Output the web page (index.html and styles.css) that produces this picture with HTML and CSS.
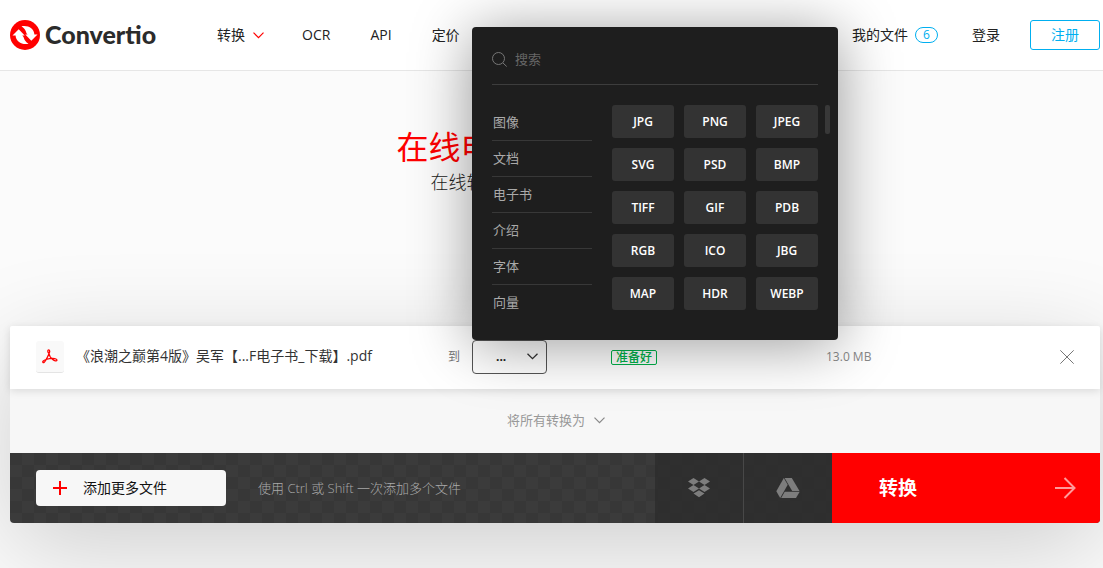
FILE: index.html
```
<!DOCTYPE html>
<html lang="zh-CN">
<head>
  <meta charset="UTF-8">
  <meta name="viewport" content="width=device-width, initial-scale=1">
  <title>Convertio</title>
  <link rel="stylesheet" href="styles.css">
</head>
<body>
<header class="header">
  <a class="logo" href="#">
    <svg width="30" height="30" viewBox="0 0 30 30">
      <circle cx="15" cy="15" r="15" fill="#f00"/>
      <path d="M2.500 15.500 8.700 9.200l6 6.300h-2.500c2.600 1.500.6 4.500 6.300 8.300C12 25 5.800 21.800 5.600 15.500z" fill="#fff"/>
      <path d="M27.500 14.500 21.300 20.800l-6-6.300h2.500c-2.600-1.500-.6-4.500-6.300-8.300C18 5 24.200 8.200 24.400 14.500z" fill="#fff"/>
    </svg>
    <span>Convertio</span>
  </a>
  <nav class="nav">
    <a class="nav-convert" href="#">转换
      <svg width="11" height="7" viewBox="0 0 11 7"><path d="M.5.700l5 5 5-5" fill="none" stroke="#f00" stroke-width="1.200"/></svg>
    </a>
    <a href="#">OCR</a>
    <a href="#">API</a>
    <a href="#">定价</a>
  </nav>
  <nav class="user">
    <a href="#">我的文件 <span class="badge">6</span></a>
    <a href="#">登录</a>
    <a class="signup" href="#">注册</a>
  </nav>
</header>

<main class="main">
  <div class="intro">
    <h1>在线电子书文件转换器</h1>
    <p>在线转换您的电子书为任意格式</p>
  </div>

  <section class="converter">
    <div class="file">
      <span class="file-icon">
        <svg width="16" height="15" viewBox="0 0 16 15" fill="none" stroke="#f00" stroke-width="1.300">
          <path d="M6.800 4.300C5.300 2.800 5.600.8 6.700.8s1.400 1.800.3 4C6 7.200 4.600 9.800 3.600 11.500c-.8 1.400-1.900 2.500-2.600 1.900-.8-.8.6-2.200 3-2.900 2.300-.7 4.600-1.100 6.700-1.100 2.700 0 4.500.9 4.200 2-.3 1-2.400.6-4.200-.9C9 9.200 7.400 7 6.800 4.300z"/>
        </svg>
      </span>
      <span class="file-name">《浪潮之巅第4版》吴军【...F电子书_下载】.pdf</span>
      <label class="to" for="format">到</label>
      <div class="format">
        <select id="format"><option>...</option></select>
        <svg class="format-arrow" width="11" height="7" viewBox="0 0 11 7"><path d="M.5.700l5 5 5-5" fill="none" stroke="#333" stroke-width="1.300"/></svg>

        <!-- format picker -->
        <div class="picker">
          <div class="search">
            <svg width="15" height="15" viewBox="0 0 15 15" fill="none" stroke="#777"><circle cx="6.500" cy="6.500" r="6"/><path d="M11 11l3.700 3.500"/></svg>
            <input type="text" placeholder="搜索" aria-label="搜索">
          </div>
          <div class="picker-body">
            <div class="groups">
              <a href="#">图像</a>
              <a href="#">文档</a>
              <a href="#">电子书</a>
              <a href="#">介绍</a>
              <a href="#">字体</a>
              <a href="#">向量</a>
            </div>
            <div class="types">
              <button>JPG</button>
              <button>PNG</button>
              <button>JPEG</button>
              <button>SVG</button>
              <button>PSD</button>
              <button>BMP</button>
              <button>TIFF</button>
              <button>GIF</button>
              <button>PDB</button>
              <button>RGB</button>
              <button>ICO</button>
              <button>JBG</button>
              <button>MAP</button>
              <button>HDR</button>
              <button>WEBP</button>
            </div>
            <div class="scrollbar"></div>
          </div>
        </div>
      </div>
      <div class="status"><span>准备好</span></div>
      <span class="size">13.0 MB</span>
      <button class="remove" aria-label="删除">
        <svg width="14" height="14" viewBox="0 0 14 14"><path d="M.3.300l13.400 13.400M13.700.300L.300 13.700" stroke="#777"/></svg>
      </button>
    </div>

    <div class="convert-all">
      <button>将所有转换为
        <svg width="11" height="7" viewBox="0 0 11 7"><path d="M.5.700l5 5 5-5" fill="none" stroke="#888" stroke-width="1.200"/></svg>
      </button>
    </div>

    <div class="bar">
      <div class="bar-files">
        <button class="add">
          <svg width="14" height="14" viewBox="0 0 14 14"><path d="M0 7h14M7 0v14" stroke="#f00" stroke-width="2"/></svg>
          添加更多文件
        </button>
        <span class="hint">使用 Ctrl 或 Shift 一次添加多个文件</span>
      </div>
      <button class="source" aria-label="Dropbox">
        <svg width="22" height="20" viewBox="0 0 22 20" fill="#7d7d7d">
          <path d="M5.500 0 11 3.500 5.500 7 0 3.500zM16.500 0 22 3.500 16.500 7 11 3.500zM5.500 7 11 10.500 5.500 14 0 10.500zM16.500 7 22 10.500 16.500 14 11 10.500zM11 12.200l5.500 3.400L11 19.200l-5.500-3.600z"/>
        </svg>
      </button>
      <button class="source" aria-label="Google Drive">
        <svg width="24" height="20" viewBox="0 0 24 20" fill="#7d7d7d">
          <path d="M7.800 0 11.700 6.700 4.200 20 .3 13.300z"/>
          <path d="M8.600 0h7.200l7.700 13h-7.300z"/>
          <path d="M8.700 13.800h15L20 20H5.200z"/>
        </svg>
      </button>
      <button class="convert">转换
        <svg width="21" height="22" viewBox="0 0 21 22"><path d="M0 11h19.500M9.500 1l10 10-10 10" fill="none" stroke="#ff9b9b" stroke-width="2"/></svg>
      </button>
    </div>
  </section>
</main>
</body>
</html>
```
FILE: styles.css
```
* {
  box-sizing: border-box;
}
body {
  margin: 0;
  min-height: 100vh;
  overflow-x: hidden;
  background: #fbfbfb;
  color: #222;
  font-family: "Open Sans", "Noto Sans CJK SC", sans-serif;
  font-size: 14px;
  line-height: 20px;
}
a {
  color: inherit;
  text-decoration: none;
}
button, input, select {
  font: inherit;
  color: inherit;
  border: none;
  padding: 0;
  margin: 0;
}
button {
  cursor: pointer;
}
svg {
  display: block;
  flex: none;
}

/* header */
.header {
  display: flex;
  align-items: center;
  height: 71px;
  padding: 0 3px 0 10px;
  background: #fff;
  border-bottom: 1px solid #e6e6e6;
}
.logo {
  display: flex;
  align-items: center;
  gap: 5px;
  font-family: Lato, sans-serif;
  font-size: 25px;
  font-weight: 900;
  line-height: 30px;
  color: #2b2b2b;
}
.logo span {
  padding-bottom: 2px;
}
.nav {
  display: flex;
  gap: 40px;
  margin-left: 61px;
}
.nav-convert {
  display: flex;
  align-items: center;
  gap: 8px;
  margin-right: -2px;
}
.user {
  display: flex;
  align-items: center;
  gap: 34px;
  margin-left: auto;
}
.user a {
  display: flex;
  align-items: center;
  gap: 7px;
}
.badge {
  width: 23px;
  border: 1px solid #00aff0;
  border-radius: 8px;
  color: #00aff0;
  font-size: 12px;
  line-height: 14px;
  text-align: center;
}
.user .signup {
  justify-content: center;
  width: 70px;
  height: 30px;
  margin-left: -4px;
  border: 1px solid #00aff0;
  border-radius: 3px;
  color: #00aff0;
}

/* intro */
.main {
  padding: 0 3px 45px 10px;
}
.intro {
  height: 255px;
  padding: 55px 0 0 3px;
  text-align: center;
}
.intro h1 {
  margin: 0;
  color: #f00;
  font-size: 32px;
  font-weight: 400;
  line-height: 42px;
}
.intro p {
  margin: 0;
  font-size: 18px;
  font-weight: 300;
  line-height: 28px;
}

/* converter */
.converter {
  background: #f7f7f7;
  border-radius: 4px;
  box-shadow: 0 25px 100px rgba(0,0,0,0.18);
}
.file {
  position: relative;
  display: grid;
  grid-template-columns: 28px 366px 42px 75px 64px 215px 1fr 15px;
  align-items: center;
  height: 63px;
  padding: 0 25px 1px 26px;
  background: #fff;
  border-radius: 2px 2px 0 0;
  box-shadow: 0 2px 8px rgba(0,0,0,0.12);
}
.file-icon {
  display: flex;
  align-items: center;
  justify-content: center;
  height: 32px;
  background: #f9f9f9;
  border-bottom: 1px solid #e4e4e4;
  border-radius: 3px;
}
.file-name {
  padding: 0 0 2px 12px;
  color: #333;
  white-space: nowrap;
}
.to {
  padding-right: 12px;
  color: #777;
  font-size: 12px;
  text-align: right;
}
.format {
  position: relative;
  height: 34px;
}
.format select {
  width: 100%;
  height: 34px;
  padding-left: 23px;
  appearance: none;
  background: transparent;
  border: 1px solid #555;
  border-radius: 4px;
  font-size: 12px;
  font-weight: 700;
}
.format-arrow {
  position: absolute;
  top: 13px;
  right: 9px;
  pointer-events: none;
}
.status {
  grid-column: 6;
}
.status span {
  display: inline-block;
  padding: 0 4px;
  border: 1px solid #00b24a;
  border-radius: 2px;
  color: #00b24a;
  font-size: 12px;
  font-weight: 500;
  line-height: 13px;
}
.size {
  color: #888;
  font-size: 12px;
}
.remove {
  background: none;
}

/* format picker */
.picker {
  position: absolute;
  left: 0;
  bottom: 100%;
  z-index: 10;
  width: 366px;
  padding: 21px 20px 19px;
  background: #1e1e1e;
  border-radius: 4px;
  box-shadow: 0 5px 60px rgba(0,0,0,0.4);
}
.search {
  display: flex;
  align-items: center;
  gap: 8px;
  height: 37px;
  padding-bottom: 14px;
  border-bottom: 1px solid #3d3d3d;
}
.search input {
  flex: 1;
  min-width: 0;
  background: none;
  outline: none;
  color: #ccc;
  font-size: 13px;
}
.search input::placeholder {
  color: #666;
}
.picker-body {
  display: flex;
  margin-top: 20px;
}
.groups {
  width: 100px;
  margin-right: 20px;
}
.groups a {
  display: block;
  height: 36px;
  padding: 0 1px;
  border-bottom: 1px solid #383838;
  color: #aaa;
  font-size: 13px;
  line-height: 35px;
}
.groups a:last-child {
  border: none;
}
.types {
  flex: 1;
  display: grid;
  grid-template-columns: repeat(3, 1fr);
  grid-auto-rows: 33px;
  gap: 10px;
}
.types button {
  background: #333;
  border-radius: 3px;
  color: #fff;
  font-size: 12px;
  font-weight: 600;
}
.scrollbar {
  width: 5px;
  height: 29px;
  margin: 0 -12px 0 7px;
  background: #383838;
  border-radius: 2px;
}

/* convert all */
.convert-all {
  display: flex;
  align-items: center;
  justify-content: center;
  height: 64px;
  padding: 0 0 2px 2px;
}
.convert-all button {
  display: flex;
  align-items: center;
  gap: 9px;
  background: none;
  color: #999;
  font-size: 13px;
}

/* bottom bar */
.bar {
  display: flex;
  height: 70px;
  overflow: hidden;
  border-radius: 0 0 4px 4px;
  background: repeating-conic-gradient(#3b3b3b 0 25%, #373737 0 50%) 0 0 / 24px 24px;
}
.bar-files {
  flex: 1;
  display: flex;
  align-items: center;
  gap: 32px;
  padding-left: 26px;
}
.add {
  display: flex;
  align-items: center;
  gap: 16px;
  width: 190px;
  height: 36px;
  padding-left: 17px;
  background: #f7f7f7;
  border-radius: 4px;
  color: #111;
}
.hint {
  color: #aaa;
  font-size: 13px;
  font-weight: 300;
}
.source {
  display: flex;
  align-items: center;
  justify-content: center;
  width: 88px;
  background: rgba(40,40,40,0.6);
}
.source + .source {
  width: 89px;
  border-left: 1px solid #484848;
}
.convert {
  display: flex;
  align-items: center;
  justify-content: space-between;
  width: 268px;
  padding: 0 24px 0 47px;
  background: #f00;
  color: #fff;
  font-size: 19px;
  font-weight: 700;
}
```
